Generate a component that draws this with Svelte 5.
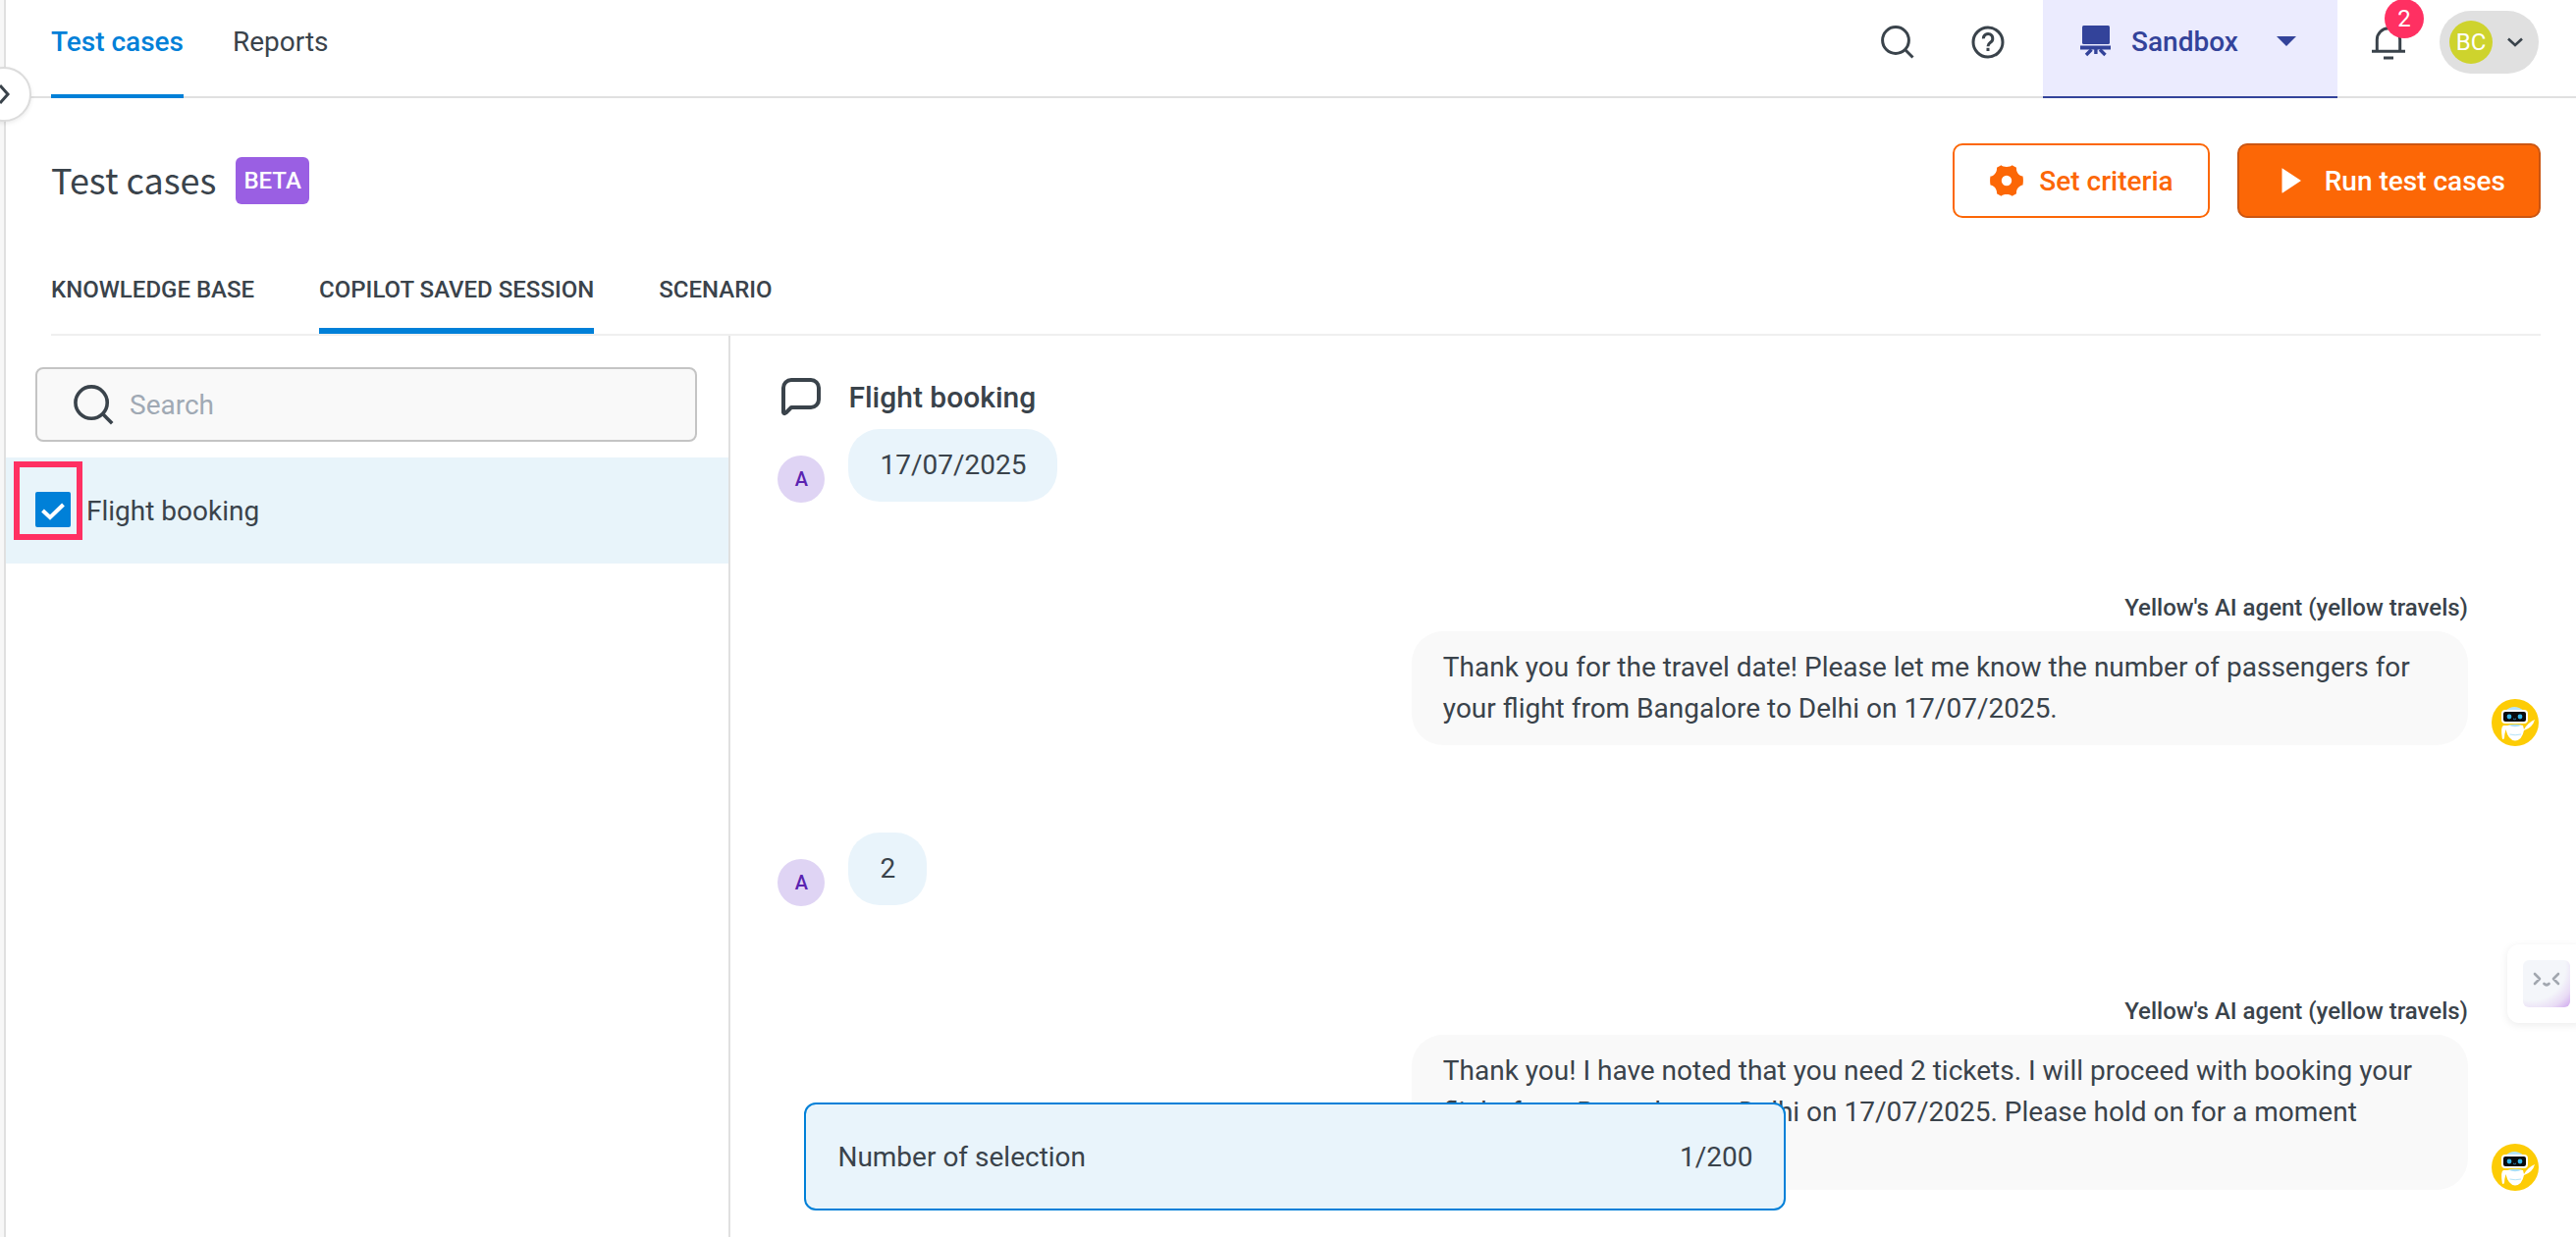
<script>
  let query = $state('');
  let activeTab = $state('copilot');
  let sessions = $state([{ id: 1, name: 'Flight booking', checked: true }]);

  const limit = 200;
  const agentName = "Yellow's AI agent (yellow travels)";

  const tabs = [
    { id: 'kb', label: 'KNOWLEDGE BASE' },
    { id: 'copilot', label: 'COPILOT SAVED SESSION' },
    { id: 'scenario', label: 'SCENARIO' },
  ];

  const messages = [
    { from: 'user', text: '17/07/2025' },
    {
      from: 'agent',
      text: 'Thank you for the travel date! Please let me know the number of passengers for your flight from Bangalore to Delhi on 17/07/2025.',
    },
    { from: 'user', text: '2' },
    {
      from: 'agent',
      text: 'Thank you! I have noted that you need 2 tickets. I will proceed with booking your flight from Bangalore to Delhi on 17/07/2025. Please hold on for a moment\nwhile I process this.',
    },
  ];

  const visible = $derived(sessions.filter((s) => s.name.toLowerCase().includes(query.toLowerCase())));
  const selected = $derived(sessions.filter((s) => s.checked).length);
</script>

{#snippet searchIcon()}
  <svg class="search-icon" viewBox="0 0 34 34" fill="none" stroke="#3a434b" stroke-width="3">
    <circle cx="15" cy="15" r="13.4" />
    <path d="M24.5 24.5 32.5 32.5" />
  </svg>
{/snippet}

<div class="app">
  <div class="rail">
    <button class="rail-toggle" aria-label="Expand menu">
      <svg width="16" height="24" viewBox="0 0 16 24" fill="none" stroke="#3a434b" stroke-width="3">
        <path d="M4 3 12 12 4 21" />
      </svg>
    </button>
  </div>

  <main>
    <header class="topbar">
      <nav>
        <a href="#test-cases" class="active">Test cases</a>
        <a href="#reports">Reports</a>
      </nav>
      <div class="tools">
        <button class="icon-button" aria-label="Search">{@render searchIcon()}</button>
        <button class="icon-button help" aria-label="Help">
          <svg width="34" height="34" viewBox="0 0 34 34" fill="none" stroke="#3a434b" stroke-width="3">
            <circle cx="17" cy="17" r="15" />
            <path d="M12.4 13.4a4.700 4.700 0 1 1 7.4 3.600c-1.800 1.300-2.800 2-2.800 4.200" />
            <path d="M17 22.800v3.200" />
          </svg>
        </button>
        <button class="env">
          <svg width="32" height="32" viewBox="0 0 32 32" fill="#33439a">
            <rect x="2" y="0" width="28" height="19" rx="1.5" />
            <rect x="0" y="20.5" width="31" height="4" />
            <path d="M14.2 24h3.4v5h-3.4z" />
            <path d="M11.5 24.5 6 30M20 24.5 25.5 30" stroke="#33439a" stroke-width="3.4" />
          </svg>
          <span>Sandbox</span>
          <svg class="caret" width="20" height="10" viewBox="0 0 20 10" fill="#33439a"><path d="M0 0h20L10 10z" /></svg>
        </button>
        <button class="icon-button bell" aria-label="Notifications">
          <svg width="34" height="36" viewBox="0 0 34 36" fill="none" stroke="#3a434b" stroke-width="3">
            <path d="M5.3 27V15.500a11.700 11.700 0 0 1 23.400 0V27" />
            <path d="M0 27.200h34" />
            <path d="M12 34h10" />
          </svg>
          <span class="count">2</span>
        </button>
        <button class="user">
          <span class="initials">BC</span>
          <svg width="16" height="10" viewBox="0 0 16 10" fill="none" stroke="#3a434b" stroke-width="2.6">
            <path d="M1 1.500 8 8 15 1.500" />
          </svg>
        </button>
      </div>
    </header>

    <section class="heading">
      <h1>Test cases</h1>
      <span class="beta">BETA</span>
      <div class="actions">
        <button class="action outline">
          <svg width="34" height="34" viewBox="0 0 34 34">
            <path
              fill="#fc6706"
              fill-rule="evenodd"
              d="M11.500 1.300C13 3.600 21 3.600 22.500 1.300L27 3.800C26.500 8 29.500 12 33.500 12.600Q34.300 17 33.500 21.400C29.500 22 26.500 26 27 30.200L22.500 32.700C21 30.400 13 30.400 11.500 32.700L7 30.200C7.500 26 4.500 22 .5 21.400Q-.3 17 .5 12.600C4.500 12 7.500 8 7 3.800ZM17 11.800a5.200 5.200 0 1 0 0 10.400a5.200 5.200 0 1 0 0-10.400Z"
            />
          </svg>
          Set criteria
        </button>
        <button class="action solid">
          <svg width="20" height="26" viewBox="0 0 20 26" fill="#fff"><path d="M1 .5Q.5 0 .5 1V25Q.5 26 1.500 25.300L20 13z" /></svg>
          Run test cases
        </button>
      </div>
    </section>

    <div class="tabs" role="tablist">
      {#each tabs as tab (tab.id)}
        <button role="tab" aria-selected={activeTab === tab.id} class:active={activeTab === tab.id} onclick={() => (activeTab = tab.id)}>
          {tab.label}
        </button>
      {/each}
    </div>

    <div class="panes">
      <aside>
        <div class="search">
          {@render searchIcon()}
          <input type="search" placeholder="Search" aria-label="Search sessions" bind:value={query} />
        </div>
        {#each visible as session (session.id)}
          <div class="session" class:selected={session.checked}>
            <span class="check">
              <input type="checkbox" id="session-{session.id}" bind:checked={session.checked} />
              <svg width="24" height="18" viewBox="0 0 24 18" fill="none" stroke="#fff" stroke-width="4">
                <path d="M1.500 8 9 15 22.500 2" />
              </svg>
            </span>
            <label for="session-{session.id}">{session.name}</label>
          </div>
        {/each}
      </aside>

      <section class="conversation">
        <h2>
          <svg width="40" height="40" viewBox="0 0 40 40" fill="none" stroke="#3a434b" stroke-width="4" stroke-linejoin="round">
            <path d="M2 35V10a8 8 0 0 1 8-8H30a8 8 0 0 1 8 8V22a8 8 0 0 1-8 8H10L4.500 35.500Q2.500 37 2 35Z" />
          </svg>
          Flight booking
        </h2>
        <div class="messages">
          {#each messages as message}
            {#if message.from === 'user'}
              <div class="message">
                <span class="avatar">A</span>
                <p class="bubble">{message.text}</p>
              </div>
            {:else}
              <div class="message agent">
                <div class="body">
                  <strong>{agentName}</strong>
                  <p class="bubble">{message.text}</p>
                </div>
                <svg class="bot" width="48" height="48" viewBox="0 0 48 48">
                  <circle cx="24" cy="24" r="24" fill="#fdcc05" />
                  <path d="M14 12Q23 4 33 12z" fill="#b5e3f8" />
                  <rect x="10" y="11" width="27" height="14" rx="4" fill="#fff" />
                  <rect x="12" y="13" width="23" height="10" rx="2" fill="#0b0b0d" />
                  <circle cx="18" cy="18" r="2.400" fill="#35b6ea" />
                  <circle cx="29" cy="18" r="2.400" fill="#35b6ea" />
                  <path d="M22 20q1.500 1.500 3 0" fill="none" stroke="#2f86b5" />
                  <path d="M16 27Q24 25 32 27L33 31Q37 24 44 21Q42 29 33 32Q31 42 24 42.500Q17 42 14.500 31Q13 36 13 40Q11.500 42 10.800 40Q9 28 12 27Z" fill="#fff" />
                  <path d="M17 26.500Q24 25 31 26.500Q24 30 17 26.500Z" fill="#a9def5" />
                  <path d="M18.500 36Q24 37.500 30 36" fill="none" stroke="#b5e3f8" />
                </svg>
              </div>
            {/if}
          {/each}
        </div>
        <div class="selection">
          <span>Number of selection</span>
          <span>{selected}/{limit}</span>
        </div>
      </section>
    </div>
  </main>

  <button class="assistant" aria-label="Open assistant">
    <span>
      <svg width="28" height="16" viewBox="0 0 28 16" fill="none" stroke="#a2a7af" stroke-width="2.600" stroke-linecap="round" stroke-linejoin="round">
        <path d="M2 2 7 7 2 12M26 2 21 7 26 12" />
        <path d="M11.500 12Q14 14.500 16.500 12" />
      </svg>
    </span>
  </button>
</div>

<style>
  :global(body) {
    margin: 0;
    background: #fff;
  }

  .app {
    display: flex;
    min-height: 100vh;
    overflow: hidden;
    position: relative;
    font-family: Roboto, 'Liberation Sans', sans-serif;
    font-size: 28px;
    color: #3a434b;
  }

  button,
  input {
    font: inherit;
    color: inherit;
  }

  button {
    border: 0;
    padding: 0;
    background: none;
    cursor: pointer;
  }

  svg {
    display: block;
    flex: none;
  }

  .rail {
    position: relative;
    width: 4px;
    flex: none;
    background: #f7f7f7;
    border-right: 2px solid #e0e0e0;
  }

  .rail-toggle {
    position: absolute;
    top: 68px;
    left: -24px;
    z-index: 2;
    width: 56px;
    height: 56px;
    box-sizing: border-box;
    display: flex;
    align-items: center;
    justify-content: center;
    border: 2px solid #dcdcdc;
    border-radius: 50%;
    background: #fff;
    box-shadow: 0 2px 4px rgba(0, 0, 0, 0.08);
  }

  main {
    flex: 1;
    min-width: 0;
    display: flex;
    flex-direction: column;
  }

  .topbar {
    display: flex;
    justify-content: space-between;
    height: 98px;
    padding: 0 38px 0 46px;
    border-bottom: 2px solid #e0e0e0;
  }

  nav {
    display: flex;
    gap: 50px;
  }

  nav a {
    height: 86px;
    padding-bottom: 10px;
    border-bottom: 4px solid transparent;
    line-height: 86px;
    color: inherit;
    text-decoration: none;
  }

  nav a.active {
    color: #0080d8;
    border-color: #0080d8;
    font-weight: 500;
  }

  .tools {
    display: flex;
    align-items: flex-start;
  }

  .icon-button {
    display: flex;
    align-items: center;
    height: 86px;
  }

  .search-icon {
    width: 34px;
    height: 34px;
  }

  .help {
    margin: 0 39px 0 58px;
  }

  .env {
    display: flex;
    align-items: center;
    width: 300px;
    height: 100px;
    box-sizing: border-box;
    padding: 0 42px 14px 38px;
    background: #ebebfe;
    border-bottom: 2px solid #33439a;
    color: #33439a;
    font-weight: 500;
  }

  .env span {
    margin-left: 20px;
  }

  .caret {
    margin-left: auto;
  }

  .bell {
    position: relative;
    margin: 0 35px;
  }

  .count {
    position: absolute;
    top: -1px;
    left: 13px;
    width: 40px;
    border-radius: 50%;
    background: #ff3062;
    color: #fff;
    font-size: 24px;
    line-height: 40px;
  }

  .user {
    display: flex;
    align-items: center;
    gap: 15px;
    height: 64px;
    margin-top: 11px;
    padding: 0 16px 0 10px;
    border-radius: 32px;
    background: #e0e0e0;
  }

  .initials {
    width: 44px;
    border-radius: 50%;
    background: #ced32d;
    color: #fff;
    font-size: 24px;
    line-height: 44px;
  }

  .heading {
    display: flex;
    align-items: center;
    margin: 46px 36px 0 46px;
  }

  h1 {
    margin: 0;
    padding-bottom: 4px;
    font-family: 'Noto Sans CJK SC', sans-serif;
    font-size: 36px;
    font-weight: 400;
    line-height: 48px;
  }

  .beta {
    margin-left: 20px;
    padding: 0 8px;
    border-radius: 6px;
    background: #9a5fe3;
    color: #fff;
    font-size: 24px;
    font-weight: 500;
    line-height: 48px;
  }

  .actions {
    display: flex;
    gap: 28px;
    margin-left: auto;
  }

  .action {
    display: flex;
    align-items: center;
    height: 76px;
    box-sizing: border-box;
    border: 2px solid #fc6706;
    border-radius: 10px;
    font-weight: 500;
  }

  .outline {
    gap: 16px;
    padding: 0 35px 0 36px;
    color: #fc6706;
  }

  .solid {
    gap: 24px;
    padding: 0 34px 0 43px;
    background: #fc6706;
    border-color: #cb5612;
    color: #fff;
  }

  .tabs {
    display: flex;
    gap: 66px;
    margin: 26px 36px 0 46px;
    border-bottom: 2px solid #efefef;
  }

  .tabs button {
    padding-top: 8px;
    border-bottom: 6px solid transparent;
    font-size: 24px;
    font-weight: 500;
    line-height: 78px;
  }

  .tabs button.active {
    border-color: #0080d8;
  }

  .panes {
    flex: 1;
    display: grid;
    grid-template-columns: 11fr 28fr;
  }

  aside {
    border-right: 2px solid #e0e0e0;
    padding-top: 32px;
  }

  .search {
    display: flex;
    align-items: center;
    gap: 16px;
    height: 72px;
    margin: 0 32px 16px 30px;
    padding-left: 37px;
    border: 2px solid #c4c4c4;
    border-radius: 8px;
    background: #f9f9f9;
  }

  .search .search-icon {
    width: 41px;
    height: 41px;
  }

  .search input {
    flex: 1;
    min-width: 0;
    padding: 0;
    border: 0;
    outline: 0;
    background: none;
  }

  .search input::placeholder {
    color: #a0a9b4;
  }

  .session {
    display: flex;
    align-items: center;
    height: 108px;
    padding-left: 8px;
  }

  .session.selected {
    background: #e8f4fa;
  }

  .check {
    position: relative;
    display: flex;
    margin: 4px 0 24px;
    padding: 25px 6px 7px 16px;
    border: 6px solid #ff3062;
  }

  .check input {
    appearance: none;
    width: 36px;
    height: 36px;
    margin: 0;
    border: 2px solid #0080d8;
    border-radius: 2px;
  }

  .check input:checked {
    background: #0080d8;
  }

  .check svg {
    position: absolute;
    left: 22px;
    top: 36px;
    pointer-events: none;
  }

  .check input:not(:checked) + svg {
    display: none;
  }

  .session label {
    margin-left: 4px;
  }

  .conversation {
    position: relative;
    padding: 42px 38px 48px 48px;
  }

  h2 {
    display: flex;
    align-items: center;
    gap: 28px;
    margin: 0;
    padding-left: 4px;
    font-size: 30px;
    font-weight: 500;
    line-height: 42px;
  }

  .messages {
    display: flex;
    flex-direction: column;
    gap: 88px;
    margin-top: 11px;
  }

  .message {
    display: flex;
    align-items: flex-end;
    gap: 24px;
  }

  .agent {
    justify-content: flex-end;
  }

  .avatar {
    width: 48px;
    border-radius: 50%;
    background: #dfd4f4;
    color: #5a23b0;
    font-size: 20px;
    font-weight: 500;
    line-height: 48px;
    text-align: center;
  }

  .body {
    display: flex;
    flex-direction: column;
    width: 60%;
  }

  .body strong {
    margin-bottom: 5px;
    font-size: 24px;
    font-weight: 500;
    line-height: 38px;
    text-align: right;
  }

  .bubble {
    margin: 0 0 1px;
    padding: 16px 32px;
    border-radius: 32px;
    background: #e9f4fb;
    line-height: 42px;
    white-space: pre-line;
  }

  .agent .bubble {
    background: #f9f9f9;
  }

  .selection {
    position: absolute;
    bottom: 28px;
    left: 75px;
    width: 1000px;
    max-width: 80%;
    height: 110px;
    box-sizing: border-box;
    display: flex;
    align-items: center;
    justify-content: space-between;
    padding: 0 32px;
    border: 2px solid #0080d8;
    border-radius: 12px;
    background: #e9f4fb;
  }

  .assistant {
    position: absolute;
    top: 962px;
    right: -10px;
    padding: 16px;
    border-radius: 12px;
    background: #fff;
    box-shadow: 0 2px 8px rgba(0, 0, 0, 0.08);
  }

  .assistant span {
    display: flex;
    justify-content: center;
    width: 48px;
    height: 36px;
    padding-top: 12px;
    border-radius: 6px;
    background: radial-gradient(circle at 20% 15%, #f4f6fa 60%, #e9dcf5 80%, #cfa6ee 100%);
  }
</style>
